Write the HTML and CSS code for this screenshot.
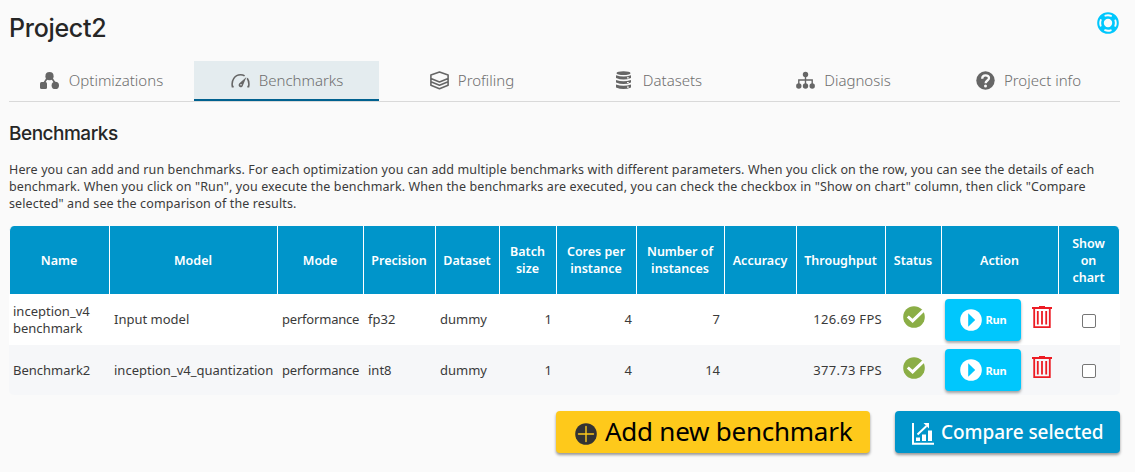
FILE: index.html
```html
<!DOCTYPE html>
<html lang="en">
<head>
<meta charset="utf-8">
<title>Project2</title>
<link rel="stylesheet" href="styles.css">
</head>
<body>
<svg width="0" height="0" class="defs">
  <symbol id="check" viewBox="0 0 22 22"><circle cx="11" cy="11" r="10.8" fill="#8bae46"/><path d="M4.8 10.5l4.8 4.4L20.5 4.3" fill="none" stroke="#fff" stroke-width="3"/></symbol>
  <symbol id="play" viewBox="0 0 22 22"><circle cx="11" cy="11" r="10.8" fill="#fff"/><path d="M8.2 4.2v13.6l7-6.8z" fill="#00c7fd"/></symbol>
  <symbol id="trash" viewBox="0 0 20 23"><path d="M0 2h20M7 .8h6M2.2 3v18.2h15.6V3M5.8 5v13.5M10 5v13.5M14.2 5v13.5" fill="none" stroke="#ed1c24" stroke-width="1.8"/></symbol>
</svg>
<main class="page">
  <header class="top">
    <h1 class="title">Project2</h1>
    <svg class="help" viewBox="0 0 22 22"><circle cx="11" cy="11" r="7.5" fill="none" stroke="#00c7fd" stroke-width="6.6"/><circle cx="11" cy="11" r="7.8" fill="none" stroke="#fafafa" stroke-width="1.9" stroke-linecap="round" stroke-dasharray="5.8 6.45" stroke-dashoffset="2.9"/></svg>
  </header>
  <nav class="tabs">
    <a class="tab first"><svg class="tab-icon" viewBox="0 0 19 19"><g fill="#666"><circle cx="9.5" cy="5.2" r="4.1"/><rect x="0" y="11" width="7" height="7" rx="1.5"/><circle cx="15.3" cy="14.4" r="3.7"/></g><path d="M8 6l-4 6M11 6l4 6" stroke="#666" stroke-width="1.6"/></svg><span>Optimizations</span></a>
    <a class="tab active"><svg class="tab-icon" viewBox="0 0 19 19"><path d="M2.7 15.6H1.4C.1 9.4 3.8 3.7 9.5 3.7c1.700 0 3 .4 4.100 1.200M16.200 7.300c1.500 2.300 2.100 5.200 1.400 8.300h-1.300" fill="none" stroke="#666" stroke-width="1.600"/><path d="M15.400 6L12 14.300a2.200 2.200 0 1 1-3.800-1.800z" fill="#666"/><circle cx="10" cy="13.700" r=".8" fill="#e4ecef"/></svg><span>Benchmarks</span></a>
    <a class="tab"><svg class="tab-icon" viewBox="0 0 19 19"><path d="M9.500 1l8.600 3v3.500l-8.600 3.500L.9 7.500V4zM.9 7.500v3.300l8.600 3.500 8.600-3.500V7.500M.9 10.800v3.400l8.600 3.500 8.600-3.500v-3.400" fill="none" stroke="#666" stroke-width="1.600" stroke-linejoin="round"/></svg><span>Profiling</span></a>
    <a class="tab data"><svg class="tab-icon" viewBox="2 0 15 19"><g fill="#666"><ellipse cx="9.500" cy="2.200" rx="7" ry="1.900"/><path d="M2 4.300q7.500 2.600 15 0v2.600q-7.500 3-15 0zM2 8.900q7.500 2.600 15 0v2.600q-7.500 3-15 0zM2 13.500q7.500 2.600 15 0v3q-7.500 3-15 0z"/></g><path d="M13 6.900h1.800M13 11.500h1.800M13 16.100h1.800" stroke="#fafafa" stroke-width="1.200"/></svg><span>Datasets</span></a>
    <a class="tab"><svg class="tab-icon" viewBox="0 0 19 19"><g fill="#666"><circle cx="9.500" cy="3.500" r="2.700"/><circle cx="2.800" cy="15" r="2.700"/><circle cx="9.500" cy="15" r="2.700"/><circle cx="16.200" cy="15" r="2.700"/></g><path d="M9.500 3v12M2.800 14V9h13.400v5" fill="none" stroke="#666" stroke-width="1.400"/></svg><span>Diagnosis</span></a>
    <a class="tab"><svg class="tab-icon" viewBox="0 0 19 19"><circle cx="9.500" cy="9.500" r="9.200" fill="#666"/><path d="M6.200 7.700C6.200 3.200 13 3.500 13 7.100c0 2.500-3.400 2.400-3.400 5.200" fill="none" stroke="#fafafa" stroke-width="2.300"/><circle cx="9.500" cy="15" r="1.500" fill="#fafafa"/></svg><span>Project info</span></a>
  </nav>
  <h2 class="subtitle">Benchmarks</h2>
  <p class="intro">Here you can add and run benchmarks. For each optimization you can add multiple benchmarks with different parameters. When you click on the row, you can see the details of each<br>benchmark. When you click on "Run", you execute the benchmark. When the benchmarks are executed, you can check the checkbox in "Show on chart" column, then click "Compare<br>selected" and see the comparison of the results.</p>
  <table class="grid">
    <colgroup><col class="c1"><col class="c2"><col class="c3"><col class="c4"><col class="c5"><col class="c6"><col class="c7"><col class="c8"><col class="c9"><col class="c10"><col class="c11"><col class="c12"><col class="c13"></colgroup>
    <thead><tr><th>Name</th><th>Model</th><th>Mode</th><th>Precision</th><th>Dataset</th><th>Batch<br>size</th><th>Cores per<br>instance</th><th>Number of<br>instances</th><th>Accuracy</th><th>Throughput</th><th>Status</th><th>Action</th><th>Show<br>on<br>chart</th></tr></thead>
    <tbody>
      <tr class="odd"><td>inception_v4<br>benchmark</td><td>Input model</td><td class="mode">performance</td><td>fp32</td><td>dummy</td><td class="num">1</td><td class="num">4</td><td class="num">7</td><td></td><td class="num fps">126.69 FPS</td><td class="status"><svg class="check"><use href="#check"/></svg></td><td class="action"><div class="actions"><button class="run"><svg class="play"><use href="#play"/></svg>Run</button><svg class="trash"><use href="#trash"/></svg></div></td><td><input type="checkbox" class="box"></td></tr>
      <tr class="even"><td>Benchmark2</td><td>inception_v4_quantization</td><td class="mode">performance</td><td>int8</td><td>dummy</td><td class="num">1</td><td class="num">4</td><td class="num">14</td><td></td><td class="num fps">377.73 FPS</td><td class="status"><svg class="check"><use href="#check"/></svg></td><td class="action"><div class="actions"><button class="run"><svg class="play"><use href="#play"/></svg>Run</button><svg class="trash"><use href="#trash"/></svg></div></td><td><input type="checkbox" class="box"></td></tr>
    </tbody>
  </table>
  <footer class="footer">
    <button class="btn add"><svg class="btn-icon" viewBox="0 0 22 22"><circle cx="11" cy="11" r="10.800" fill="#333"/><path d="M11 3.500v15M3.500 11h15" stroke="#fec91b" stroke-width="1.400" stroke-linecap="round"/></svg><span class="label">Add new benchmark</span></button>
    <button class="btn compare"><svg class="btn-icon" viewBox="0 0 22 22"><path d="M1 0v20.700h21" fill="none" stroke="#fff" stroke-width="2"/><path d="M4 14.500h4V18H4zM10 11.500h4V18h-4zM16 7.500h4V18h-4z" fill="#fff"/><path d="M5.500 11.500L14.500 3" stroke="#fff" stroke-width="1.900"/><path d="M11.500 0H17v5.500z" fill="#fff"/></svg><span>Compare selected</span></button>
  </footer>
</main>
</body>
</html>
```
FILE: styles.css
```css
* { box-sizing: border-box; }
body { margin: 0; background: #fafafa; color: #3a3a3a; font: 13px/17px "Noto Sans", sans-serif; }
.defs { display: block; }
.page { width: 1111px; height: 472px; margin-left: 9px; }
.top { display: flex; justify-content: space-between; height: 61px; padding-top: 12px; }
.title { margin: 0; color: #262626; font: 500 25px/32px Inter, sans-serif; letter-spacing: -0.3px; }
.help { width: 22px; height: 22px; margin: -0.5px 1.5px 0 0; }
.tabs { display: grid; grid-template-columns: repeat(6, 185px); height: 41px; border-bottom: 1px solid #d9d9d9; }
.tab { display: flex; align-items: center; justify-content: center; gap: 9px; padding-left: 1px; color: #6e6e6e; font-size: 15px; font-weight: 300; white-space: nowrap; border-bottom: 2px solid transparent; }
.tab.first { gap: 10px; padding-left: 0; }
.tab.active { background: #e4ecef; border-color: #00618f; }
.tab:nth-child(n+5) { padding-left: 4px; }
.tab-icon { width: 19px; height: 19px; }
.tab.data { gap: 12px; padding-left: 5px; }
.data .tab-icon { width: 15px; }
.subtitle { margin: 20px 0 0; color: #262626; font: 500 19px/24px Inter, sans-serif; letter-spacing: -0.5px; }
.intro { margin: 15px 0 14px; font-size: 12.5px; letter-spacing: 0.12px; white-space: nowrap; }
.grid { width: 1111px; table-layout: fixed; border-collapse: separate; border-spacing: 0; }
.c1 { width: 101px; } .c2 { width: 168px; } .c3 { width: 86px; } .c4 { width: 72px; } .c5 { width: 64px; }
.c6 { width: 57px; } .c7 { width: 80px; } .c8 { width: 88px; } .c9 { width: 72px; } .c10 { width: 89px; }
.c11 { width: 56px; } .c12 { width: 117px; } .c13 { width: 61px; }
th { height: 68px; padding: 0 1px 0 0; background: #0095ca; color: #fff; font-size: 12.5px; font-weight: 600; border-right: 1px solid #fff; white-space: nowrap; }
th:first-child { border-left: 1px solid #fafafa; border-top-left-radius: 5px; }
th:last-child { border-right-color: #fafafa; border-top-right-radius: 5px; }
td { padding: 0 5px 0 4px; white-space: nowrap; }
.odd td { height: 51px; background: #fff; }
.even td { height: 50px; background: #f6f7f9; }
.even td:first-child { border-bottom-left-radius: 5px; }
.even td:last-child { border-bottom-right-radius: 5px; }
td.mode { letter-spacing: -0.2px; }
.num { text-align: right; }
td.fps { padding-right: 4px; letter-spacing: 0.3px; }
td.status { padding: 0 5px; }
td.action { padding: 0 0 0 3px; }
.check { display: block; width: 22px; height: 22px; margin: 0 auto 5px; }
.actions { display: flex; align-items: flex-start; gap: 11px; height: 42px; }
.run { display: flex; align-items: center; justify-content: center; gap: 4px; width: 76px; height: 42px; padding: 0; border: 0; border-radius: 4px; background: #00c7fd; color: #fff; font: 700 11px "Noto Sans", sans-serif; letter-spacing: -0.2px; box-shadow: 0 2px 3px rgba(0,0,0,.35); }
.play { width: 22px; height: 22px; }
.trash { width: 20px; height: 23px; margin-top: 7px; }
.box { display: block; width: 14px; height: 14px; margin: 2px auto 0; appearance: none; border: 1px solid #767676; border-radius: 2px; background: #fff; }
.footer { display: flex; justify-content: flex-end; gap: 25px; margin-top: 16px; }
.btn { display: flex; align-items: center; height: 42px; padding: 0; border: 0; border-radius: 4px; font-family: "Noto Sans", sans-serif; white-space: nowrap; box-shadow: 0 2px 3px rgba(0,0,0,.4); }
.btn-icon { width: 22px; height: 22px; margin-top: 4px; }
.label { margin-top: -2px; }
.add { width: 314px; padding-left: 19px; gap: 8px; background: #fec91b; color: #000; font-size: 26px; letter-spacing: -0.25px; }
.compare { width: 225px; padding-left: 17px; gap: 7px; background: #0095ca; color: #fff; font-size: 19px; font-weight: 500; letter-spacing: -0.05px; }
```
